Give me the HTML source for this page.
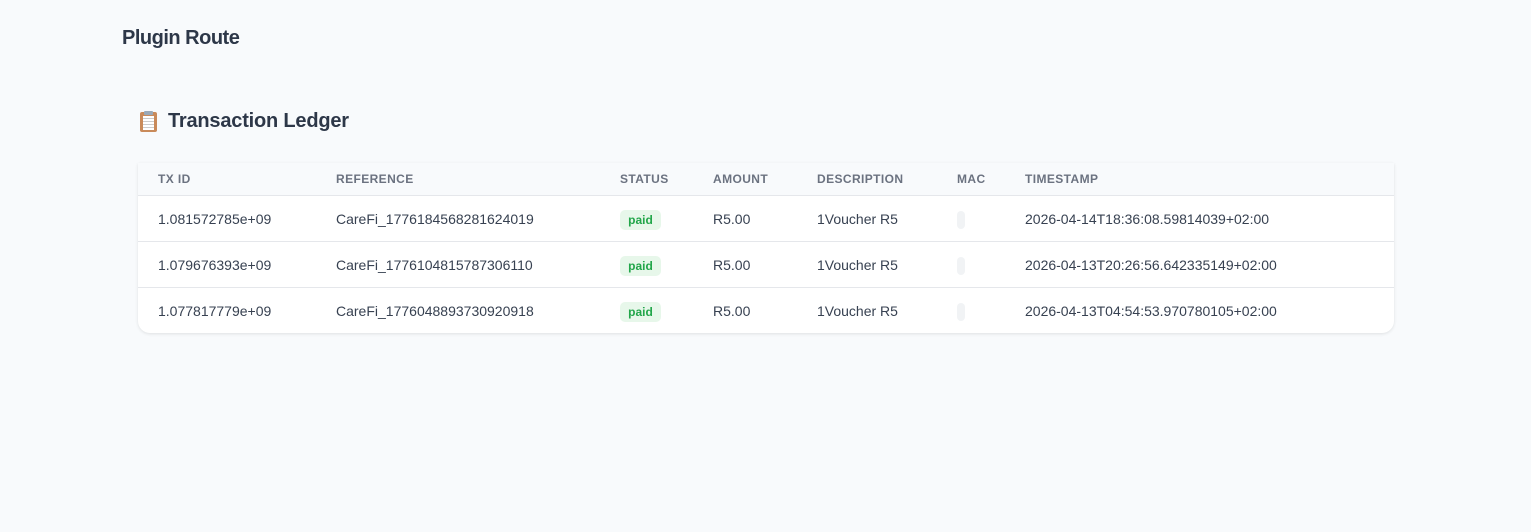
<!DOCTYPE html>
<html><head><meta charset="utf-8"><style>
*{margin:0;padding:0;box-sizing:border-box}
body{width:1531px;height:532px;background:#f8fafc;font-family:"Liberation Sans",sans-serif;color:#374151;position:relative;overflow:hidden}
h1{position:absolute;left:122px;top:27px;font-size:20px;font-weight:bold;color:#2d3748;letter-spacing:-0.5px}
h2{position:absolute;left:140px;top:110px;font-size:20px;font-weight:bold;color:#2d3748;letter-spacing:-0.2px;display:flex;align-items:center}
.clip{display:inline-block;width:17px;height:20px;background:#c98a5a;border-radius:2px;position:relative;margin-right:11px}
.clip:before{content:"";position:absolute;left:3px;top:4px;width:11px;height:14px;background:#fff;background-image:repeating-linear-gradient(#fff 0 2px,#ccc 2px 3px)}
.clip:after{content:"";position:absolute;left:4px;top:-1px;width:9px;height:4px;background:#9aa9b8;border-radius:1px}
.card{position:absolute;left:138px;top:163px;width:1256px;height:170px;background:#fff;border-radius:0 0 12px 12px;box-shadow:0 1px 3px rgba(0,0,0,0.1);overflow:hidden}
.hd{position:absolute;left:0;top:0;width:100%;height:33px;background:#f8fafc;border-bottom:1px solid #e5e7eb}
.row{position:absolute;left:0;width:100%;height:46px;border-bottom:1px solid #e5e7eb}
.c{position:absolute;font-size:14px;color:#374151;top:15px;white-space:nowrap}
.h{position:absolute;font-size:12px;font-weight:bold;color:#6b7280;top:9px;letter-spacing:0.4px}
.b{position:absolute;top:14px;width:41px;height:20px;background:#e7f7ea;border-radius:5px;color:#22a64a;font-size:12px;font-weight:bold;text-align:center;line-height:20px}
.m{position:absolute;top:15px;width:8px;height:18px;background:#f1f3f5;border-radius:4px}
</style></head><body>
<h1>Plugin Route</h1>
<h2><span class="clip"></span>Transaction Ledger</h2>
<div class="card">
<div class="hd">
<span class="h" style="left:20px">TX ID</span>
<span class="h" style="left:198px">REFERENCE</span>
<span class="h" style="left:482px">STATUS</span>
<span class="h" style="left:575px">AMOUNT</span>
<span class="h" style="left:679px">DESCRIPTION</span>
<span class="h" style="left:819px">MAC</span>
<span class="h" style="left:887px">TIMESTAMP</span>
</div>
<div class="row" style="top:33px">
<span class="c" style="left:20px">1.081572785e+09</span><span class="c" style="left:198px">CareFi_1776184568281624019</span><span class="b" style="left:482px">paid</span><span class="c" style="left:575px">R5.00</span><span class="c" style="left:679px">1Voucher R5</span><span class="m" style="left:819px"></span><span class="c" style="left:887px">2026-04-14T18:36:08.59814039+02:00</span>
</div>
<div class="row" style="top:79px">
<span class="c" style="left:20px">1.079676393e+09</span><span class="c" style="left:198px">CareFi_1776104815787306110</span><span class="b" style="left:482px">paid</span><span class="c" style="left:575px">R5.00</span><span class="c" style="left:679px">1Voucher R5</span><span class="m" style="left:819px"></span><span class="c" style="left:887px">2026-04-13T20:26:56.642335149+02:00</span>
</div>
<div class="row" style="top:125px;border-bottom:none">
<span class="c" style="left:20px">1.077817779e+09</span><span class="c" style="left:198px">CareFi_1776048893730920918</span><span class="b" style="left:482px">paid</span><span class="c" style="left:575px">R5.00</span><span class="c" style="left:679px">1Voucher R5</span><span class="m" style="left:819px"></span><span class="c" style="left:887px">2026-04-13T04:54:53.970780105+02:00</span>
</div>
</div>
</body></html>
